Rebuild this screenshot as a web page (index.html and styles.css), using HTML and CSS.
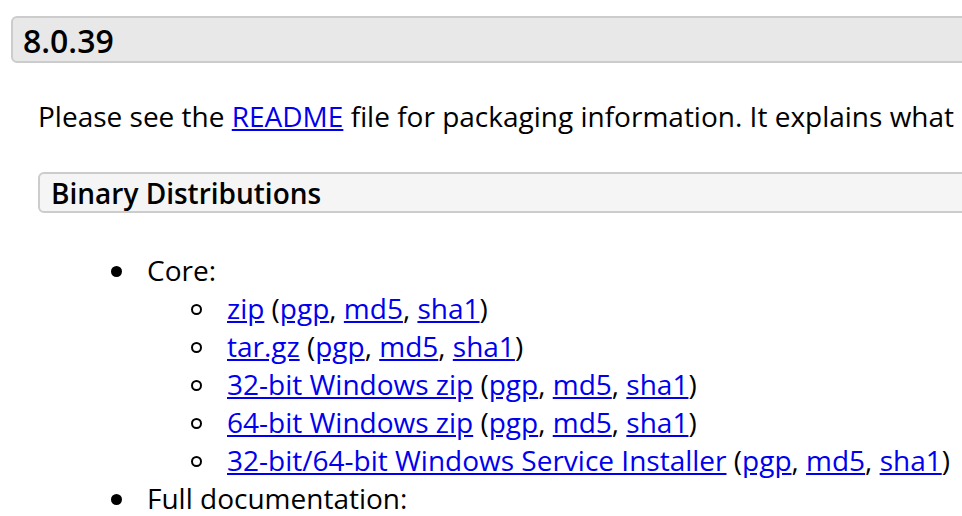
FILE: index.html
```html
<!DOCTYPE html>
<html>
<head>
<meta charset="utf-8">
<link rel="stylesheet" href="styles.css">
</head>
<body>
<div class="page">
  <h3 class="version">8.0.39</h3>
  <div class="section">
    <p class="intro">Please see the <a href="#">README</a> file for packaging information. It explains what</p>
    <h4 class="sub">Binary Distributions</h4>
    <ul class="dist">
      <li class="item">Core:
        <ul class="files">
          <li class="file"><a href="#">zip</a> (<a href="#">pgp</a>, <a href="#">md5</a>, <a href="#">sha1</a>)</li>
          <li class="file"><a href="#">tar.gz</a> (<a href="#">pgp</a>, <a href="#">md5</a>, <a href="#">sha1</a>)</li>
          <li class="file"><a href="#">32-bit Windows zip</a> (<a href="#">pgp</a>, <a href="#">md5</a>, <a href="#">sha1</a>)</li>
          <li class="file"><a href="#">64-bit Windows zip</a> (<a href="#">pgp</a>, <a href="#">md5</a>, <a href="#">sha1</a>)</li>
          <li class="file"><a href="#">32-bit/64-bit Windows Service Installer</a> (<a href="#">pgp</a>, <a href="#">md5</a>, <a href="#">sha1</a>)</li>
        </ul>
      </li>
      <li class="item">Full documentation:</li>
    </ul>
  </div>
</div>
</body>
</html>
```
FILE: styles.css
```css
html, body {
  margin: 0;
  padding: 0;
  background: #fff;
  overflow: hidden;
}
body {
  font-family: "Open Sans", "DejaVu Sans", sans-serif;
  font-size: 28px;
  color: #000;
}
.page {
  width: 1400px;
  padding: 16px 0 0 11px;
}
.version {
  margin: 0;
  height: 43px;
  line-height: 45px;
  padding: 0 0 0 10px;
  font-size: 32px;
  font-weight: 600;
  background: #e8e8e8;
  border: 2px solid #cccccc;
  border-radius: 6px;
}
.section {
  padding-left: 27px;
}
.intro {
  margin: 0;
  padding-top: 34px;
  line-height: 38px;
  white-space: nowrap;
}
a {
  color: #0000ee;
  text-decoration: underline;
}
.sub {
  margin: 37px 0 0 0;
  height: 37px;
  line-height: 39px;
  padding-left: 11px;
  font-size: 28px;
  font-weight: 600;
  background: #f5f5f5;
  border: 2px solid #cccccc;
  border-radius: 6px;
}
.dist {
  margin: 38px 0 0 0;
  padding-left: 109px;
  line-height: 38px;
  list-style: none;
}
.files {
  margin: 0;
  padding-left: 80px;
  list-style: none;
}
.item::before,
.file::before {
  content: "";
  display: inline-block;
  box-sizing: border-box;
  width: 11px;
  height: 11px;
  margin-left: -36px;
  margin-right: 25px;
  border-radius: 50%;
  vertical-align: 4px;
}
.item::before {
  background: #000;
}
.file::before {
  border: 2px solid #000;
}
```
